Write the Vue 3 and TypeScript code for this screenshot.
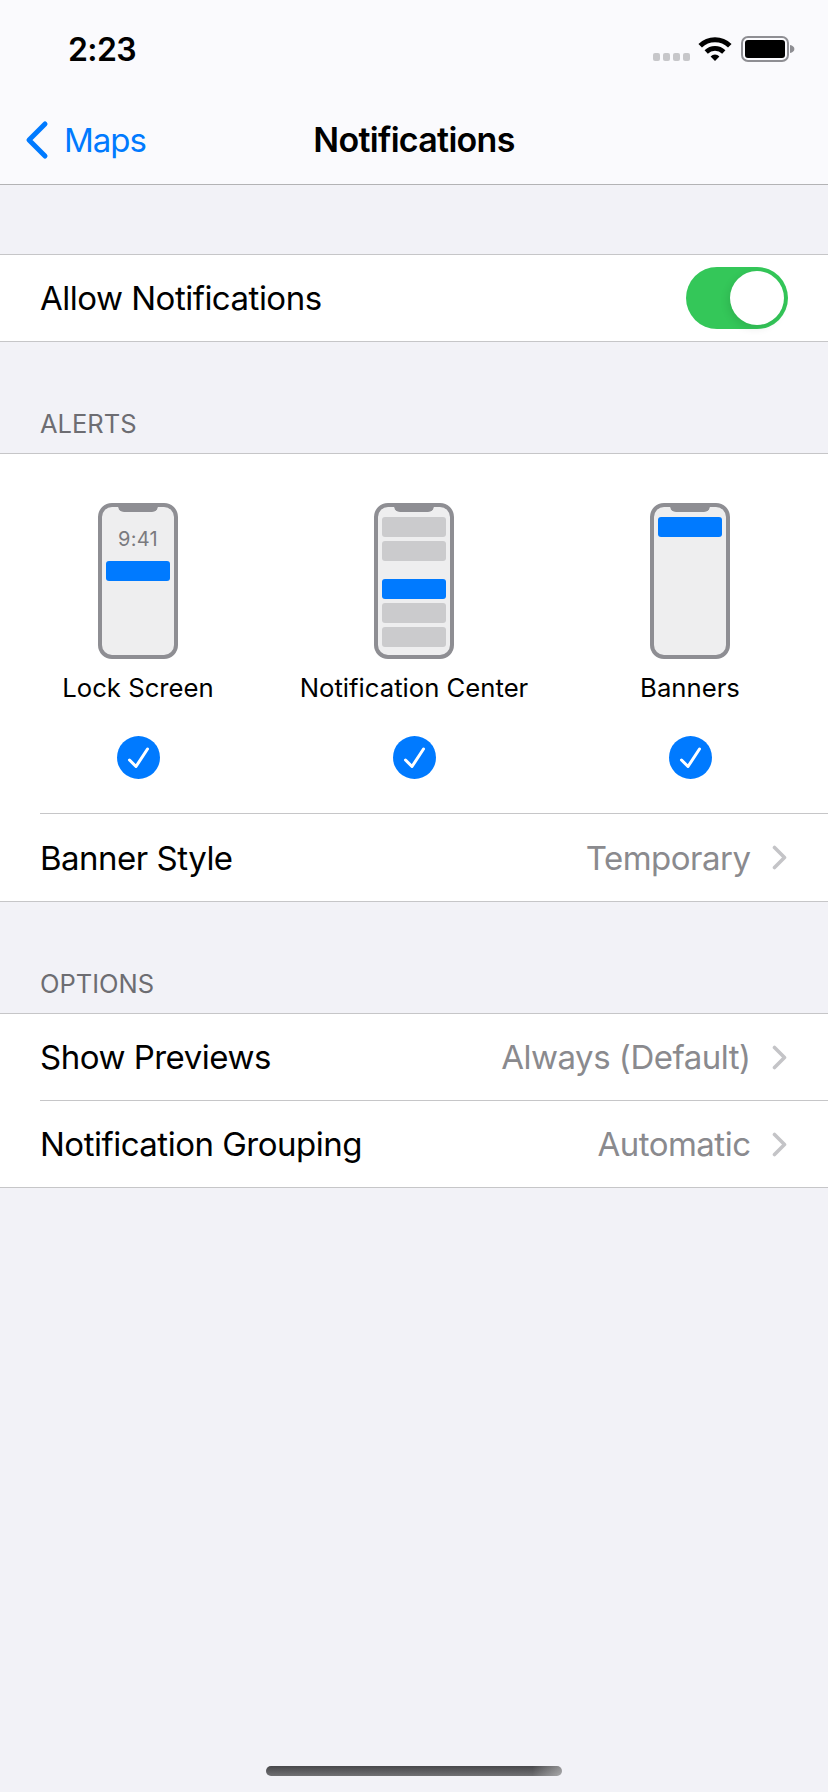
<script setup lang="ts">
interface Style {
  label: string
  kind: 'lock' | 'center' | 'banner'
}

interface Row {
  label: string
  value: string
}

const styles: Style[] = [
  { label: 'Lock Screen', kind: 'lock' },
  { label: 'Notification Center', kind: 'center' },
  { label: 'Banners', kind: 'banner' },
]

const options: Row[] = [
  { label: 'Show Previews', value: 'Always (Default)' },
  { label: 'Notification Grouping', value: 'Automatic' },
]
</script>

<template>
  <div class="page">
    <header class="top">
      <div class="status">
        <span class="clock">2:23</span>
        <div class="status-icons">
          <div class="dots"><i></i><i></i><i></i><i></i></div>
          <svg class="wifi" width="34" height="25" viewBox="0 0 34 25">
            <path d="M2.2 9.8a21 21 0 0 1 29.6 0" fill="none" stroke="#000" stroke-width="5" />
            <path d="M8.2 16a12.5 12.5 0 0 1 17.6 0" fill="none" stroke="#000" stroke-width="4.6" />
            <path d="M12.6 20.4a6.2 6.2 0 0 1 8.8 0L17 25z" fill="#000" />
          </svg>
          <svg class="battery" width="54" height="26" viewBox="0 0 54 26">
            <rect x="1" y="1" width="46" height="24" rx="6" fill="none" stroke="#8e8e93" stroke-width="2" />
            <rect x="4" y="4" width="40" height="18" rx="3" fill="#000" />
            <path d="M49 9c2.600.6 4.400 2 4.400 4s-1.800 3.400-4.400 4z" fill="#8e8e93" />
          </svg>
        </div>
      </div>
      <nav class="nav">
        <div class="back">
          <svg width="26" height="40" viewBox="0 0 26 40">
            <path d="M22 4L6 20l16 16" fill="none" stroke="#007aff" stroke-width="5" stroke-linecap="round" stroke-linejoin="round" />
          </svg>
          <span>Maps</span>
        </div>
        <h1>Notifications</h1>
      </nav>
    </header>

    <section class="group first">
      <div class="row short">
        <span>Allow Notifications</span>
        <div class="toggle"><div class="knob"></div></div>
      </div>
    </section>

    <h2>Alerts</h2>
    <section class="group">
      <div class="styles">
        <div v-for="s in styles" :key="s.kind" class="style">
          <div class="phone" :class="s.kind">
            <div class="notch"></div>
            <template v-if="s.kind === 'lock'">
              <span class="time">9:41</span>
              <div class="bar blue"></div>
            </template>
            <template v-else-if="s.kind === 'center'">
              <div class="bar"></div>
              <div class="bar"></div>
              <div class="bar blue spaced"></div>
              <div class="bar"></div>
              <div class="bar"></div>
            </template>
            <div v-else class="bar blue"></div>
          </div>
          <span class="style-label">{{ s.label }}</span>
          <svg class="check" width="43" height="43" viewBox="0 0 43 43">
            <circle cx="21.500" cy="21.500" r="21.500" fill="#007aff" />
            <path d="M12.500 24l6.500 6.500L30.500 13" fill="none" stroke="#fff" stroke-width="3" stroke-linecap="round" stroke-linejoin="round" />
          </svg>
        </div>
      </div>
      <div class="sep"></div>
      <div class="row">
        <span>Banner Style</span>
        <div class="detail">
          <span class="value">Temporary</span>
          <svg width="15" height="25" viewBox="0 0 15 25">
            <path d="M2.500 2.500l10 10-10 10" fill="none" stroke="#c4c4c7" stroke-width="3.600" stroke-linecap="round" stroke-linejoin="round" />
          </svg>
        </div>
      </div>
    </section>

    <h2>Options</h2>
    <section class="group">
      <template v-for="(o, i) in options" :key="o.label">
        <div v-if="i > 0" class="sep"></div>
        <div class="row short">
          <span>{{ o.label }}</span>
          <div class="detail">
            <span class="value">{{ o.value }}</span>
            <svg width="15" height="25" viewBox="0 0 15 25">
              <path d="M2.500 2.500l10 10-10 10" fill="none" stroke="#c4c4c7" stroke-width="3.600" stroke-linecap="round" stroke-linejoin="round" />
            </svg>
          </div>
        </div>
      </template>
    </section>

    <div class="home"></div>
  </div>
</template>

<style>
body {
  background: #f2f2f7;
}
</style>

<style scoped>
.page {
  width: 828px;
  height: 1792px;
  display: flex;
  flex-direction: column;
  background: #f2f2f7;
  font-family: Inter, "Noto Sans", sans-serif;
  color: #000;
  overflow: hidden;
}

.top {
  height: 185px;
  box-sizing: border-box;
  background: #fafafd;
  border-bottom: 1px solid #b3b3b5;
}

.status {
  height: 88px;
  display: flex;
  align-items: flex-start;
  justify-content: space-between;
  padding: 0 33px 0 68px;
}

.clock {
  margin-top: 30px;
  font-size: 32px;
  line-height: 40px;
  font-weight: 600;
  letter-spacing: -0.6px;
}

.status-icons {
  display: flex;
  align-items: flex-start;
  margin-top: 36px;
}

.dots {
  display: flex;
  gap: 2.500px;
  margin-top: 17px;
}

.dots i {
  width: 7.500px;
  height: 8px;
  border-radius: 2px;
  background: #c7c7ca;
}

.wifi {
  margin-left: 8px;
}

.battery {
  margin-left: 9px;
}

.nav {
  height: 96px;
  box-sizing: border-box;
  padding-top: 7px;
  display: flex;
  align-items: center;
  justify-content: center;
  position: relative;
}

.nav h1 {
  margin: 0;
  font-size: 34px;
  line-height: 44px;
  font-weight: 600;
  letter-spacing: -0.7px;
}

.back {
  position: absolute;
  left: 23px;
  top: 32px;
  display: flex;
  align-items: center;
  gap: 15px;
  color: #007aff;
  font-size: 33px;
  letter-spacing: -1px;
}

.group {
  background: #fff;
  border-top: 1px solid #c6c6c8;
  border-bottom: 1px solid #c6c6c8;
}

.group.first {
  margin-top: 69px;
}

h2 {
  margin: 0;
  height: 111px;
  padding: 0 40px 14px;
  box-sizing: border-box;
  display: flex;
  align-items: flex-end;
  font-size: 25.500px;
  line-height: 30px;
  font-weight: 400;
  text-transform: uppercase;
  color: #6d6d72;
}

.row {
  height: 87px;
  padding: 0 40px;
  display: flex;
  align-items: center;
  justify-content: space-between;
  font-size: 33px;
  letter-spacing: -0.5px;
}

.row.short {
  height: 86px;
}

.detail {
  display: flex;
  align-items: center;
  gap: 21px;
  padding-right: 1.500px;
}

.value {
  color: #8a8a8e;
}

.sep {
  height: 1px;
  margin-left: 40px;
  background: #c6c6c8;
}

.toggle {
  width: 102px;
  height: 62px;
  box-sizing: border-box;
  padding: 4px;
  display: flex;
  justify-content: flex-end;
  border-radius: 31px;
  background: #34c759;
}

.knob {
  width: 54px;
  height: 54px;
  border-radius: 50%;
  background: #fff;
  box-shadow: -2px 3px 8px rgba(0, 0, 0, 0.1);
}

.styles {
  display: grid;
  grid-template-columns: 276px 276px 276px;
  height: 310px;
  padding-top: 49px;
}

.style {
  display: flex;
  flex-direction: column;
  align-items: center;
}

.phone {
  width: 80px;
  height: 156px;
  box-sizing: border-box;
  position: relative;
  display: flex;
  flex-direction: column;
  align-items: center;
  gap: 4px;
  padding: 10px 4px 0;
  border: 4px solid #8e8e93;
  border-radius: 14px;
  background: #eeeeef;
}

.notch {
  position: absolute;
  top: -1px;
  left: 16px;
  width: 40px;
  height: 6px;
  border-radius: 0 0 6px 6px;
  background: #8e8e93;
}

.bar {
  width: 64px;
  height: 20px;
  flex: none;
  border-radius: 3px;
  background: #cbcbcd;
}

.bar.blue {
  background: #007aff;
}

.bar.spaced {
  margin-top: 14px;
}

.time {
  margin-top: 10px;
  margin-bottom: 6px;
  font-size: 20px;
  line-height: 24px;
  color: #7a7a7e;
  letter-spacing: 0.3px;
}

.style-label {
  margin-top: 14px;
  font-size: 25.700px;
  line-height: 30px;
}

.check {
  margin-top: 33px;
}

.home {
  width: 296px;
  height: 10px;
  margin: auto auto 16px;
  border-radius: 5px;
  background: linear-gradient(to right, transparent 90%, rgba(255, 255, 255, 0.4)), linear-gradient(#47474a, #707073);
}
</style>
